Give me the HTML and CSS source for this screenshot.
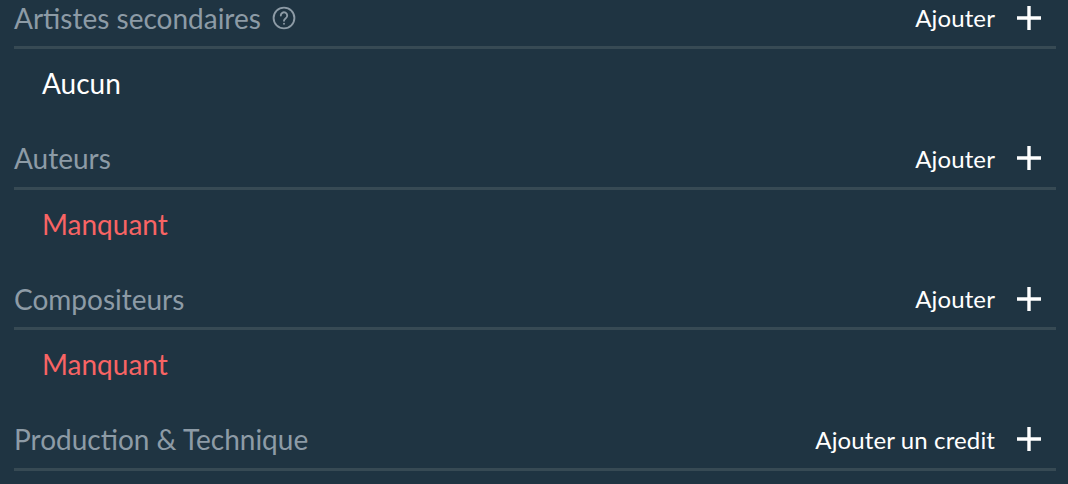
FILE: index.html
```html
<!DOCTYPE html>
<html lang="fr">
<head>
    <meta charset="UTF-8">
    <title>Crédits</title>
    <link rel="stylesheet" href="styles.css">
</head>
<body>
    <div class="credits">
        <section class="group">
            <div class="group-head">
                <div class="group-title">Artistes secondaires
                    <svg class="help-icon" width="24" height="24" viewBox="0 0 24 24" fill="none" stroke="#8d9ba6" stroke-width="1.9" stroke-linecap="round">
                        <circle cx="12" cy="12" r="10.4"/>
                        <path d="M8.8 9.6a3.2 3.2 0 1 1 5 2.6c-1.1.8-1.8 1.3-1.8 2.6"/>
                        <path d="M12 17.6v.1"/>
                    </svg>
                </div>
                <button class="add-btn">Ajouter
                    <svg width="26" height="26" viewBox="0 0 26 26" stroke="#fff" stroke-width="3.4"><path d="M13 1v24M1 13h24"/></svg>
                </button>
            </div>
            <div class="group-value">Aucun</div>
        </section>

        <section class="group">
            <div class="group-head">
                <div class="group-title">Auteurs</div>
                <button class="add-btn">Ajouter
                    <svg width="26" height="26" viewBox="0 0 26 26" stroke="#fff" stroke-width="3.4"><path d="M13 1v24M1 13h24"/></svg>
                </button>
            </div>
            <div class="group-value missing">Manquant</div>
        </section>

        <section class="group">
            <div class="group-head">
                <div class="group-title">Compositeurs</div>
                <button class="add-btn">Ajouter
                    <svg width="26" height="26" viewBox="0 0 26 26" stroke="#fff" stroke-width="3.4"><path d="M13 1v24M1 13h24"/></svg>
                </button>
            </div>
            <div class="group-value missing">Manquant</div>
        </section>

        <section class="group">
            <div class="group-head">
                <div class="group-title">Production &amp; Technique</div>
                <button class="add-btn">Ajouter un credit
                    <svg width="26" height="26" viewBox="0 0 26 26" stroke="#fff" stroke-width="3.4"><path d="M13 1v24M1 13h24"/></svg>
                </button>
            </div>
        </section>
    </div>
</body>
</html>
```

FILE: styles.css
```css
html, body {
    margin: 0;
    height: 484px;
    overflow: hidden;
}
body {
    font-family: "Lato", "Open Sans", sans-serif;
    background-color: #1f3442;
}
.credits {
    padding: 0 12px 0 14px;
    margin-top: -8px;
}
.group {
    height: 140.67px;
}
.group:last-child {
    height: auto;
}
.group-head {
    height: 57px;
    box-sizing: border-box;
    display: flex;
    justify-content: space-between;
    align-items: center;
    border-bottom: 3px solid #374a54;
    padding-bottom: 3px;
}
.group-title {
    display: flex;
    align-items: center;
    gap: 11px;
    font-size: 28px;
    color: #8d9ba6;
}
.add-btn {
    display: flex;
    align-items: center;
    gap: 21px;
    padding: 0 14px 0 0;
    background: none;
    border: none;
    font-family: inherit;
    font-size: 24px;
    letter-spacing: 0.12px;
    color: #fff;
}
.group-value {
    padding: 18px 0 0 28px;
    font-size: 28px;
    line-height: 32px;
    color: #fff;
}
.missing {
    color: #f86464;
}
```
